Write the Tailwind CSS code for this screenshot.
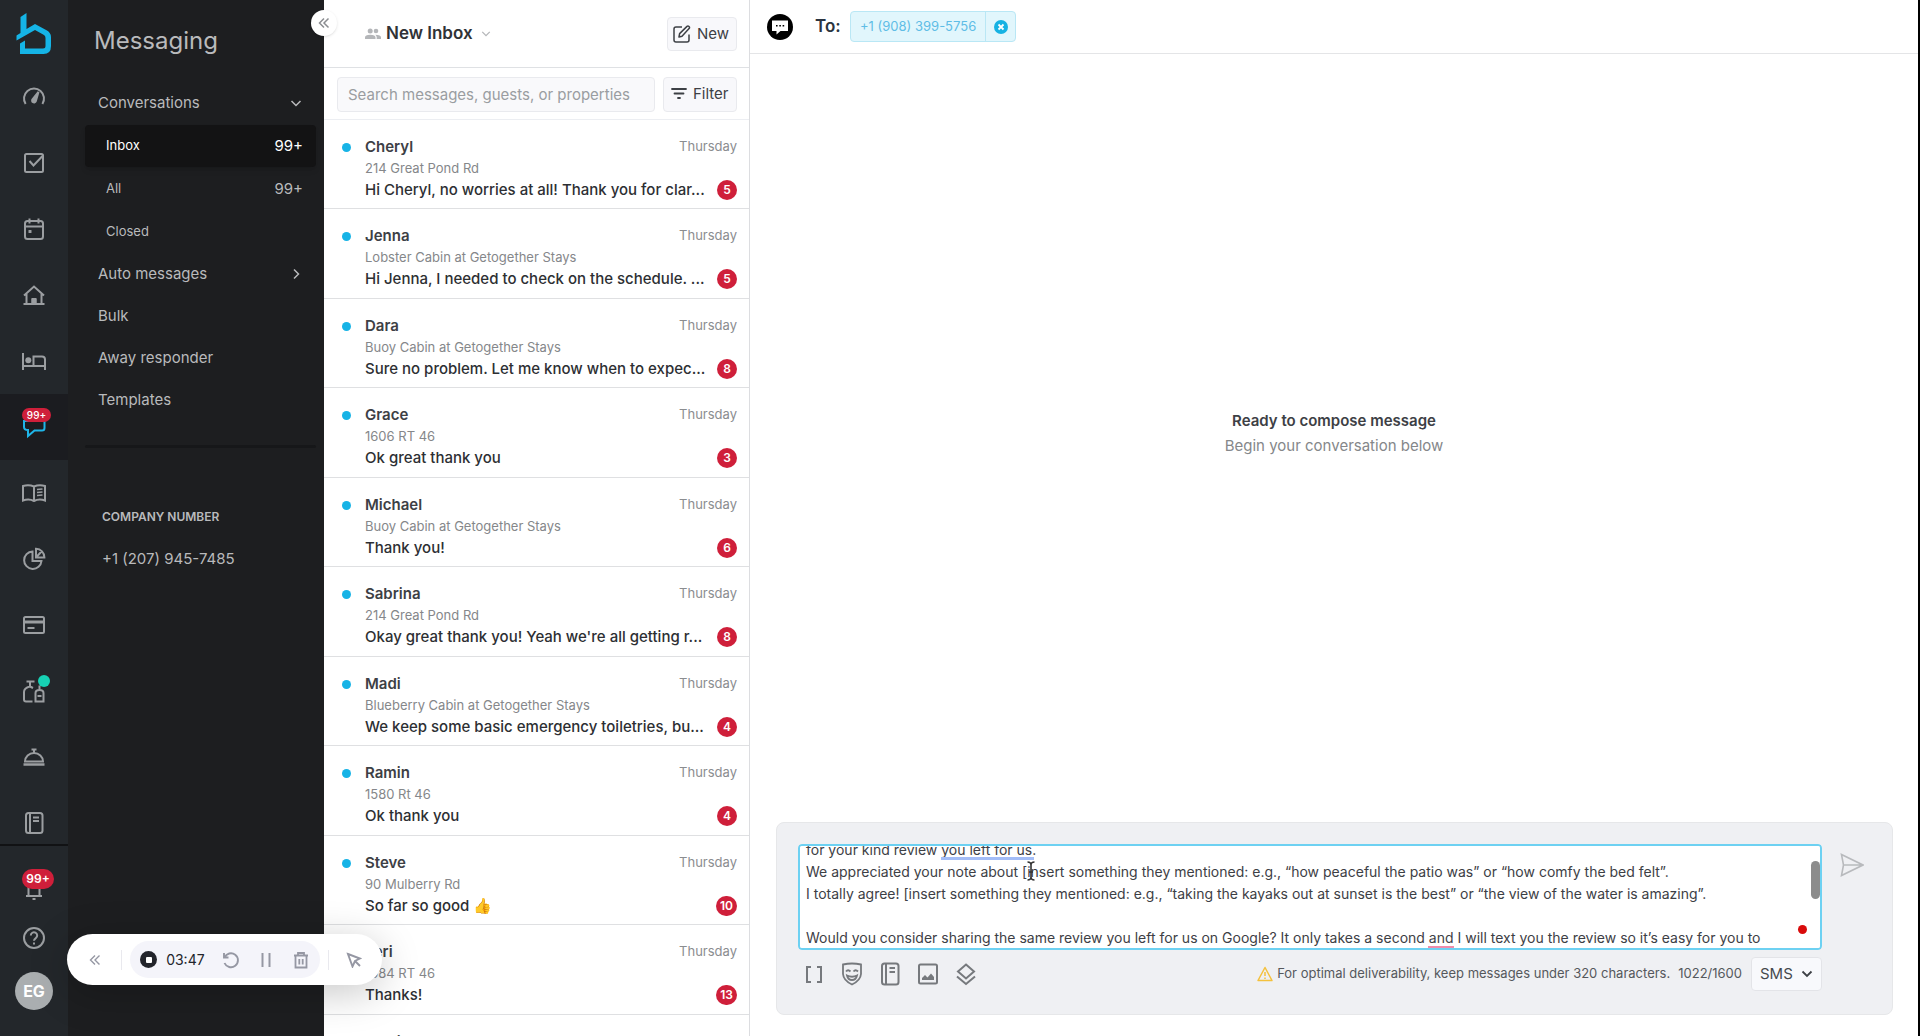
<!DOCTYPE html>
<html lang="en">
<head>
    <meta charset="UTF-8">
    <meta name="viewport" content="width=device-width, initial-scale=1.0">
    <title>Messaging - Inbox</title>
    <script src="https://cdn.jsdelivr.net/npm/@tailwindcss/browser@4"></script>
</head>

<body class="h-screen overflow-hidden bg-white font-['Inter','Liberation_Sans',sans-serif] text-[#3d4045]">
    <div class="flex h-full border-r-2 border-black">

        <!-- Icon rail -->
        <nav aria-label="Main" class="flex w-[68px] shrink-0 flex-col bg-[#23272b] text-[#9b9ea1]">
            <a href="#" aria-label="Home" class="flex h-16 shrink-0 items-center justify-center pt-1">
                <svg class="h-[42px] w-[36px]" viewBox="0 0 36 42" fill="#15b4e6" fill-rule="evenodd">
                    <path d="M4.500 4 10.500 0V16L19 11 31 17.500Q35 20 35 24V33Q35 41 27.500 41H4V30.500L9 27.500V35.500H27Q29.500 35.500 29.500 33V25Q29.500 23 28 22L19 17 .5 27.500V22.500L4.500 20Z"/>
                </svg>
            </a>
            <ul class="min-h-0 flex-1 overflow-hidden">
                <li><a href="#" aria-label="Dashboard" class="flex h-[66px] items-center justify-center">
                    <svg class="size-6" viewBox="0 0 24 24" fill="none" stroke="currentColor" stroke-width="2"><path d="M3.600 19A10 10 0 1 1 20.400 19"/><path d="M16.500 7 13.800 16.200A1.900 1.900 0 1 1 10.500 14.400Z" fill="currentColor"/></svg>
                </a></li>
                <li><a href="#" aria-label="Tasks" class="flex h-[66px] items-center justify-center">
                    <svg class="size-6" viewBox="0 0 24 24" fill="none" stroke="currentColor" stroke-width="2"><rect x="3" y="3" width="18" height="18" rx="1.500"/><path d="m7.500 10 4 4.500L20.500 5"/></svg>
                </a></li>
                <li><a href="#" aria-label="Calendar" class="flex h-[66px] items-center justify-center">
                    <svg class="size-6" viewBox="0 0 24 24" fill="none" stroke="currentColor" stroke-width="2"><rect x="3" y="4" width="18" height="18" rx="2.500"/><path d="M3 9.500h18M7.500 1.500v5M16.500 1.500v5"/><rect x="6.500" y="13" width="3" height="3" rx=".5" fill="currentColor" stroke="none"/></svg>
                </a></li>
                <li><a href="#" aria-label="Properties" class="flex h-[66px] items-center justify-center">
                    <svg class="size-6" viewBox="0 0 24 24" fill="none" stroke="currentColor" stroke-width="2"><path d="M1.500 21h21M4.500 21V11M19.500 21V11M2 12.500l10-9 10 9"/><path d="M9.800 21v-5.500h4.400V21Z" fill="currentColor" stroke-width="1"/></svg>
                </a></li>
                <li><a href="#" aria-label="Rooms" class="flex h-[66px] items-center justify-center">
                    <svg class="size-6" viewBox="0 0 24 24" fill="none" stroke="currentColor" stroke-width="2"><path d="M1 4v17M1 17h22M11.500 17V7.500H20a3 3 0 0 1 3 3V21"/><circle cx="6.300" cy="11.200" r="3" fill="currentColor" stroke="none"/></svg>
                </a></li>
                <li><a href="#" aria-label="Messaging" class="flex h-[66px] items-center justify-center bg-[#1b1c20] text-[#1fb5e8]">
                    <span class="relative">
                        <svg class="size-6" viewBox="0 0 24 24" fill="none" stroke="currentColor" stroke-width="2"><path d="M2 6v6q0 3 4 3v6l6.500-5.500H20q2.500 0 2.500-2.500V6Z"/></svg>
                        <span class="absolute -top-[7px] left-0 flex h-[14px] w-[29px] items-center justify-center rounded-full bg-[#cf1f3a] text-[10px] font-medium text-white">99+</span>
                    </span>
                </a></li>
                <li><a href="#" aria-label="Guidebook" class="flex h-[66px] items-center justify-center">
                    <svg class="size-6" viewBox="0 0 24 24" fill="none" stroke="currentColor" stroke-width="2"><path d="M12 20Q7 17.500 1 19.500V5Q7 3.500 12 5.500 17 3.500 23 5V19.500Q17 17.500 12 20ZM12 5.500V20"/><path d="M15 8.500l5.500-.5M15 11.500l5.500-.5M15 14.500l5.500-.5" stroke-width="1.500"/></svg>
                </a></li>
                <li><a href="#" aria-label="Reports" class="flex h-[66px] items-center justify-center">
                    <svg class="size-6" viewBox="0 0 24 24" fill="none" stroke="currentColor" stroke-width="2"><path d="M10.500 4.500A8.700 8.700 0 1 0 19.500 14h-9Z"/><path d="M14 1.800V10.500H22.400A8.500 8.500 0 0 0 14 1.800ZM14 10.500l5.500-6"/></svg>
                </a></li>
                <li><a href="#" aria-label="Payments" class="flex h-[66px] items-center justify-center">
                    <svg class="size-6" viewBox="0 0 24 24" fill="none" stroke="currentColor" stroke-width="2"><rect x="2" y="4" width="20" height="16" rx="1.500"/><path d="M2 9h20" stroke-width="3"/><path d="M5.500 15h7"/></svg>
                </a></li>
                <li><a href="#" aria-label="Supplies" class="flex h-[66px] items-center justify-center">
                    <span class="relative">
                        <svg class="size-6" viewBox="0 0 24 24" fill="none" stroke="currentColor" stroke-width="2"><path d="M10.500 22.500H4A2 2 0 0 1 2 20.500V13Q2 9 8 7.500V3M4.500 2.500h8M8 7.500l3 1.500"/><path d="M13.500 22.500V14q0-3 4-3t4 3v8.500ZM17.500 11V6.500M15.500 17h4"/></svg>
                        <span class="absolute -top-1 left-4 size-3 rounded-full bg-[#17d1b4]"></span>
                    </span>
                </a></li>
                <li><a href="#" aria-label="Services" class="flex h-[66px] items-center justify-center">
                    <svg class="size-6" viewBox="0 0 24 24" fill="none" stroke="currentColor" stroke-width="2"><path d="M1.500 19.500h21" stroke-width="2.500"/><path d="M3 16.500a9 8.500 0 0 1 18 0ZM12 8V5M9.500 4.500h5"/></svg>
                </a></li>
                <li><a href="#" aria-label="Notebook" class="flex h-[66px] items-center justify-center">
                    <svg class="size-6" viewBox="0 0 24 24" fill="none" stroke="currentColor" stroke-width="2"><rect x="4" y="2" width="16.500" height="20" rx="2.500"/><path d="M8 2v20M11 6.500h6M11 10h6"/></svg>
                </a></li>
            </ul>
            <div class="flex h-[192px] shrink-0 flex-col items-center border-t-2 border-[#111214] pt-[30px]">
                <button type="button" aria-label="Notifications" class="relative size-6">
                    <svg class="size-6" viewBox="0 0 24 24" fill="none" stroke="currentColor" stroke-width="2"><path d="M4 20h16M6.500 20V9a5.500 5.500 0 0 1 11 0v11M10.500 23h3"/></svg>
                    <span class="absolute -top-[7px] left-0 flex h-5 w-8 items-center justify-center rounded-full bg-[#cf1f3a] text-xs font-semibold text-white">99+</span>
                </button>
                <button type="button" aria-label="Help" class="mt-[26px] size-6">
                    <svg class="size-6" viewBox="0 0 24 24" fill="none" stroke="currentColor" stroke-width="2"><circle cx="12" cy="12" r="10"/><path d="M8.800 9.500a3.200 3.200 0 1 1 5 2.600Q12 13.300 12 14.800"/><path d="M12 16.600v2"/></svg>
                </button>
                <button type="button" class="mt-[22px] flex size-[38px] items-center justify-center rounded-full bg-[#aaaeb0] text-base font-bold text-white">EG</button>
            </div>
        </nav>

        <!-- Section menu -->
        <aside class="relative w-[256px] shrink-0 bg-[#1d1e20] text-[15px] text-[#b9babc]">
            <h1 class="pt-6 pl-[26px] text-2xl/[34px]">Messaging</h1>
            <button type="button" aria-label="Collapse menu" class="absolute top-[10px] -right-[13px] z-10 flex size-[26px] items-center justify-center rounded-full bg-white text-[#8b8d91] shadow">
                <svg class="size-3" viewBox="0 0 12 12" fill="none" stroke="currentColor" stroke-width="1.500"><path d="M6 1.500 1.500 6 6 10.500M10.500 1.500 6 6l4.500 4.500"/></svg>
            </button>
            <ul class="mt-6 pr-2 pl-[17px]">
                <li>
                    <a href="#" class="flex h-[42px] items-center justify-between pr-[14px] pl-[13px]">Conversations
                        <svg class="size-3" viewBox="0 0 12 12" fill="none" stroke="currentColor" stroke-width="1.500"><path d="m1.500 4 4.500 4.500L10.500 4"/></svg></a>
                    <ul class="mt-px flex flex-col gap-px text-[13px]">
                        <li><a href="#" aria-current="page" class="flex h-[42px] items-center justify-between rounded bg-[#131314] pr-[13px] pl-[21px] text-white shadow-md">Inbox <span class="text-[15px]">99+</span></a></li>
                        <li><a href="#" class="flex h-[42px] items-center justify-between pr-[13px] pl-[21px]">All <span class="text-[15px]">99+</span></a></li>
                        <li><a href="#" class="flex h-[42px] items-center pl-[21px]">Closed</a></li>
                    </ul>
                </li>
                <li><a href="#" class="flex h-[42px] items-center justify-between pr-[14px] pl-[13px]">Auto messages
                    <svg class="size-3" viewBox="0 0 12 12" fill="none" stroke="currentColor" stroke-width="1.500"><path d="M4 1.500 8.500 6 4 10.500"/></svg></a></li>
                <li><a href="#" class="flex h-[42px] items-center pl-[13px]">Bulk</a></li>
                <li><a href="#" class="flex h-[42px] items-center pl-[13px]">Away responder</a></li>
                <li><a href="#" class="flex h-[42px] items-center pl-[13px]">Templates</a></li>
            </ul>
            <div class="mt-6 mr-2 ml-[17px] h-[3px] rounded-full bg-[#161719]"></div>
            <h2 class="mt-[59px] pl-[34px] text-xs/5 font-semibold">COMPANY NUMBER</h2>
            <p class="mt-5 pl-[34px] leading-6">+1 (207) 945-7485</p>
        </aside>

        <!-- Conversation list -->
        <section class="flex w-[426px] shrink-0 flex-col border-r border-[#dcdde0]">
            <header class="flex h-[68px] shrink-0 items-center border-b border-[#dfe1e4] pt-px pr-3 pl-[41px]">
                <svg class="h-4 w-4 text-[#b4b6b9]" viewBox="0 0 16 16" fill="currentColor"><circle cx="5.200" cy="5" r="2.500"/><circle cx="11" cy="5" r="2.300"/><path d="M0 13v-1.500Q0 8.800 5.200 8.800t5.300 2.700V13ZM11.700 13v-1.700q0-1.400-1.400-2.500Q16 8.800 16 11.400V13Z"/></svg>
                <h2 class="ml-[5px] text-[17px] font-semibold text-[#303236]">New Inbox</h2>
                <svg class="ml-2 size-[10px] text-[#b4b6b9]" viewBox="0 0 12 12" fill="none" stroke="currentColor" stroke-width="1.500"><path d="m1.500 3.500 4.500 4.500 4.500-4.500"/></svg>
                <button type="button" class="ml-auto flex h-[34px] w-[70px] items-center gap-[6px] rounded border border-[#e9eaee] bg-[#f8f8fb] pl-[5px] text-[15px]">
                    <svg class="size-[18px] shrink-0" viewBox="0 0 18 18" fill="none" stroke="currentColor" stroke-width="1.500" stroke-linejoin="round"><path d="M9 2H3Q1 2 1 4V15Q1 17 3 17H14Q16 17 16 15V9.500"/><path d="m6 12 .6-3.400L14 1.400q1-.8 2 .1t.1 2.100L9 11.200Z"/></svg>
                    New
                </button>
            </header>
            <form class="flex h-[52px] shrink-0 items-center gap-2 border-b border-[#eceef2] pt-px pr-3 pl-[13px]">
                <input type="search" aria-label="Search conversations" placeholder="Search messages, guests, or properties" class="h-[35px] min-w-0 flex-1 rounded border border-[#e9eaee] bg-[#f9f9fb] px-[10px] text-[15px] placeholder:text-[#9a9da1]">
                <button type="button" class="flex h-[35px] w-[74px] items-center gap-[6px] rounded border border-[#e9eaee] bg-[#f8f8fb] pl-[7px] text-[15px]">
                    <svg class="size-4 shrink-0" viewBox="0 0 16 16" fill="none" stroke="currentColor" stroke-width="1.800" stroke-linecap="round"><path d="M1 3h14M3.500 7.500h9M7 12h2"/></svg>
                    Filter
                </button>
            </form>
            <ul id="conversation-list" class="min-h-0 flex-1 overflow-hidden"></ul>
        </section>

        <!-- Message pane -->
        <main class="flex min-w-0 flex-1 flex-col">
            <header class="flex h-[54px] shrink-0 items-center border-b border-[#e4e5e7] pl-[17px]">
                <svg class="size-[26px]" viewBox="0 0 26 26"><circle cx="13" cy="13" r="13" fill="#000"/><path d="M5 6.500H21V17H13.500L9.500 20.500V17H5Z" fill="#fff"/><path d="M9 11.700h1.600M12.300 11.700h1.600M15.600 11.700h1.600" stroke="#000" stroke-width="1.600"/></svg>
                <h2 class="ml-[22px] w-[35px] text-[17px] font-semibold text-[#2b3440]">To:</h2>
                <div class="flex h-[31px] items-center rounded border border-[#b9e7f5] bg-[#e1f6fc]">
                    <span class="flex h-full items-center border-r border-[#b9e7f5] px-[9px] text-[13px] text-[#5fbde6]">+1 (908) 399-5756</span>
                    <button type="button" aria-label="Remove recipient" class="flex h-full w-[29px] items-center justify-center">
                        <svg class="size-[14px]" viewBox="0 0 14 14"><circle cx="7" cy="7" r="7" fill="#16b2e3"/><path d="m4.500 4.500 5 5M9.500 4.500l-5 5" stroke="#fff" stroke-width="1.800"/></svg>
                    </button>
                </div>
            </header>

            <div class="flex min-h-0 flex-1 flex-col items-center justify-center pb-[10px] text-center text-[15px]/[25px]">
                <p class="font-semibold">Ready to compose message</p>
                <p class="text-[#85878a]">Begin your conversation below</p>
            </div>

            <form class="mr-[25px] mb-[21px] ml-[26px] h-[193px] shrink-0 rounded-lg border border-[#e6e7e9] bg-[#eff0f3] px-[21px] pt-[21px]">
                <div class="flex">
                    <div class="relative h-[106px] min-w-0 flex-1 overflow-hidden rounded">
                        <textarea id="message-box" aria-label="Message" spellcheck="false" class="block h-full w-full resize-none rounded border-2 border-[#6dd1f2] bg-white pr-4 pl-[6px] text-sm/[22px] [scrollbar-width:none] outline-none">for your kind review you left for us.
We appreciated your note about [insert something they mentioned: e.g., “how peaceful the patio was” or “how comfy the bed felt”.
I totally agree! [insert something they mentioned: e.g., “taking the kayaks out at sunset is the best” or “the view of the water is amazing”.

Would you consider sharing the same review you left for us on Google? It only takes a second and I will text you the review so it’s easy for you to</textarea>
                        <!-- grammar hints -->
                        <span class="absolute top-[13px] left-[143px] h-[3px] w-[93px] bg-[#a3bdf7]"></span>
                        <span class="absolute bottom-[2px] left-[630px] h-[2px] w-[26px] bg-[#f08cab]"></span>
                        <span class="absolute right-[15px] bottom-[16px] size-[9px] rounded-full bg-[#d90b0b]"></span>
                        <!-- scroll thumb -->
                        <span class="absolute top-[17px] right-[2px] h-[38px] w-[9px] rounded-full bg-[#8c8c8c]"></span>
                        <!-- text cursor -->
                        <svg class="absolute top-[17px] left-[228px] h-5 w-[10px]" viewBox="0 0 10 20" fill="none" stroke="#333" stroke-width="1.600"><path d="M1.500 1Q5 1 5 4V16Q5 19 1.500 19M8.500 1Q5 1 5 4M5 16Q5 19 8.500 19M3 11h4"/></svg>
                    </div>
                    <button type="button" aria-label="Send" class="mt-[9px] mr-[7px] ml-[18px] size-6 text-[#b8babd]">
                        <svg class="size-6" viewBox="0 0 24 24" fill="none" stroke="currentColor" stroke-width="1.600"><path d="M1.500 1.500 23 12 1.500 22.500 3.500 12ZM3.500 12H22"/></svg>
                    </button>
                </div>
                <div class="mt-[7px] mr-[49px] flex items-center text-[13px] text-[#55585c]">
                    <div class="flex gap-[14px] pl-1 text-[#76797d]">
                        <button type="button" aria-label="Insert shortcode" class="size-6"><svg class="size-6" viewBox="0 0 24 24" fill="none" stroke="currentColor" stroke-width="2"><path d="M9 5H5V20H9M15 5h4V20H15"/></svg></button>
                        <button type="button" aria-label="Insert emoji" class="size-6"><svg class="size-6" viewBox="0 0 24 24" fill="none" stroke="currentColor" stroke-width="1.800"><path d="M3 2.500Q12 .5 21 2.500V12Q20.500 18.500 12 22.500 3.500 18.500 3 12Z"/><path d="M6 9.500q2-2.500 4.500 0M13.500 9.500q2-2.500 4.500 0M7 13.500q5 2.500 10 0-1 4.500-5 4.500t-5-4.500Z"/></svg></button>
                        <button type="button" aria-label="Insert template" class="size-6"><svg class="size-6" viewBox="0 0 24 24" fill="none" stroke="currentColor" stroke-width="2"><rect x="4" y="1.500" width="16.500" height="21" rx="2.500"/><path d="M8 1.500v21M11.500 6h5.500M11.500 10h5.500"/></svg></button>
                        <button type="button" aria-label="Insert image" class="size-6"><svg class="size-6" viewBox="0 0 24 24" fill="none" stroke="currentColor" stroke-width="2"><rect x="3" y="2.500" width="18" height="19" rx="1.500"/><path d="M6 18v-2l3-3 2.500 2.500L15 11.500l3 3.500v3Z" fill="currentColor" stroke="none"/></svg></button>
                        <button type="button" aria-label="Insert field set" class="size-6"><svg class="size-6" viewBox="0 0 24 24" fill="none" stroke="currentColor" stroke-width="2"><path d="m12 2.500 8 7-8 7-8-7ZM3 14.500l9 7.500 9-7.500"/></svg></button>
                    </div>
                    <svg class="ml-auto h-4 w-4" viewBox="0 0 16 16" fill="none" stroke="#f4c13d" stroke-width="1.500" stroke-linejoin="round"><path d="M8 1.500 15 14.500H1ZM8 6v4M8 11.500v1.500"/></svg>
                    <p class="ml-1">For optimal deliverability, keep messages under 320 characters.</p>
                    <p class="ml-2">1022/1600</p>
                    <div class="relative ml-[9px]">
                        <select aria-label="Channel" class="block h-[34px] w-[71px] appearance-none rounded-sm border border-[#e3e4e8] bg-[#f8f9fc] pl-2 text-[15px] text-[#46494e]">
                            <option>SMS</option>
                        </select>
                        <svg class="pointer-events-none absolute top-[11px] right-[9px] size-3 text-[#3d4045]" viewBox="0 0 12 12" fill="none" stroke="currentColor" stroke-width="1.800"><path d="m1.500 3.500 4.500 4.500 4.500-4.500"/></svg>
                    </div>
                </div>
            </form>
        </main>
    </div>

    <!-- Floating recorder -->
    <div class="fixed bottom-[51px] left-[67px] z-20 flex h-[51px] w-[315px] items-center rounded-full bg-white pl-[22px] text-[#9597a3] shadow-[0_8px_40px_rgba(0,0,0,0.22)]">
        <button type="button" aria-label="Collapse recorder"><svg class="size-3" viewBox="0 0 12 12" fill="none" stroke="currentColor" stroke-width="1.400"><path d="M6 1.500 1.500 6 6 10.500M10.500 1.500 6 6l4.500 4.500"/></svg></button>
        <span class="ml-5 h-5 w-px bg-[#e9e9ee]"></span>
        <div class="ml-2 flex h-[37px] w-[190px] items-center justify-between rounded-full bg-[#f4f4fa] pr-[10px] pl-[10px]">
            <button type="button" aria-label="Stop" class="flex size-[17px] items-center justify-center rounded-full bg-[#22242b]"><span class="size-[6px] rounded-[1px] bg-white"></span></button>
            <span class="-ml-2 text-sm text-[#22242b]">03:47</span>
            <button type="button" aria-label="Restart"><svg class="size-[18px]" viewBox="0 0 18 18" fill="none" stroke="currentColor" stroke-width="1.900"><path d="M2 2v4.500h4.500M2.500 6.500A7 7 0 1 1 2.500 12"/></svg></button>
            <button type="button" aria-label="Pause"><svg class="size-[18px]" viewBox="0 0 18 18" fill="none" stroke="currentColor" stroke-width="2"><path d="M5.500 2v14M12.500 2v14"/></svg></button>
            <button type="button" aria-label="Delete"><svg class="size-[18px]" viewBox="0 0 18 18" fill="none" stroke="currentColor" stroke-width="1.800"><path d="M2 4.500h14M6 4.500V2h6v2.500M3.500 4.500V16.500h11V4.500M7.300 8v5.500M10.700 8v5.500"/></svg></button>
        </div>
        <span class="ml-2 h-5 w-px bg-[#e9e9ee]"></span>
        <button type="button" aria-label="Pointer" class="ml-[17px]"><svg class="size-4" viewBox="0 0 16 16" fill="none" stroke="currentColor" stroke-width="1.900"><path d="m2 2 12 4.500-5 2.500-2.500 5.500ZM9 9l5 5"/></svg></button>
    </div>

    <script>
        const conversations = [
            ["Cheryl", "214 Great Pond Rd", "Hi Cheryl, no worries at all! Thank you for clar...", 5],
            ["Jenna", "Lobster Cabin at Getogether Stays", "Hi Jenna, I needed to check on the schedule. ...", 5],
            ["Dara", "Buoy Cabin at Getogether Stays", "Sure no problem. Let me know when to expec...", 8],
            ["Grace", "1606 RT 46", "Ok great thank you", 3],
            ["Michael", "Buoy Cabin at Getogether Stays", "Thank you!", 6],
            ["Sabrina", "214 Great Pond Rd", "Okay great thank you! Yeah we're all getting r...", 8],
            ["Madi", "Blueberry Cabin at Getogether Stays", "We keep some basic emergency toiletries, bu...", 4],
            ["Ramin", "1580 Rt 46", "Ok thank you", 4],
            ["Steve", "90 Mulberry Rd", "So far so good 👍", 10],
            ["Teri", "1584 RT 46", "Thanks!", 13],
            ["Madi", "Blueberry Cabin at Getogether Stays", "Thank you!", 2],
        ];

        document.getElementById("conversation-list").innerHTML = conversations.map(([name, place, preview, unread]) => `
            <li class="h-[90px] border-b border-[#dfe0e2] odd:h-[89px]">
                <a href="#" class="flex h-full flex-col pt-4 pr-3 pl-[41px]">
                    <span class="relative flex h-[22px] items-center justify-between">
                        <span class="absolute -left-[23px] size-[9px] rounded-full bg-[#17b3e6]"></span>
                        <span class="text-[15px] font-semibold">${name}</span>
                        <span class="text-[13px] text-[#8b8d90]">Thursday</span>
                    </span>
                    <span class="text-[13px]/[21px] text-[#85878a]">${place}</span>
                    <span class="flex h-[22px] items-center justify-between">
                        <span class="whitespace-nowrap text-[15px] font-medium text-[#2d2f33]">${preview}</span>
                        <span class="flex h-5 min-w-5 items-center justify-center rounded-full bg-[#cf1f3a] px-1 text-xs font-semibold text-white">${unread}</span>
                    </span>
                </a>
            </li>`).join("");

        document.getElementById("message-box").scrollTop = 7;
    </script>
</body>
</html>
